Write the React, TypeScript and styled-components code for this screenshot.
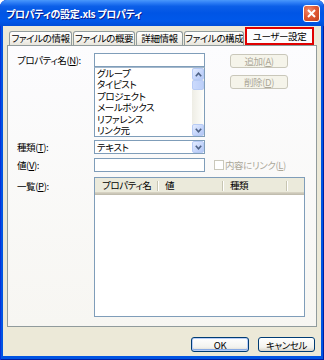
import styled, { createGlobalStyle, css } from 'styled-components';

const GlobalStyle = createGlobalStyle`
  html, body {
    margin: 0;
    padding: 0;
    background: #ffffff;
  }
  body {
    font-family: "Noto Sans CJK JP", "Noto Sans", sans-serif;
  }
`;

const uiText = css`
  font-family: "Noto Sans CJK JP", "Liberation Sans", sans-serif;
  font-size: 9.5px;
  letter-spacing: -0.4px;
  font-feature-settings: "palt";
  color: #000;
`;

const tabs = [
  { label: 'ファイルの情報', width: 63 },
  { label: 'ファイルの概要', width: 62 },
  { label: '詳細情報', width: 47 },
  { label: 'ファイルの構成', width: 60 },
  { label: 'ユーザー設定', width: 69, active: true },
];

const propNames = ['グループ', 'タイピスト', 'プロジェクト', 'メールボックス', 'リファレンス', 'リンク元'];

const columns = [
  { label: 'プロパティ名', width: 63 },
  { label: '値', width: 65 },
  { label: '種類', width: 64 },
];

const Chevron = ({ up }: { up?: boolean }) => (
  <svg width="7" height="5" viewBox="0 0 7 5">
    <polyline
      points={up ? '0.8,4.2 3.5,1.2 6.2,4.2' : '0.8,0.8 3.5,3.8 6.2,0.8'}
      fill="none"
      stroke="#4D6185"
      strokeWidth="1.6"
    />
  </svg>
);

const App = () => {
  return (
    <>
      <GlobalStyle />
      <Window>
        <TitleBar>
          <Title>プロパティの設定.xls プロパティ</Title>
          <CloseButton>
            <svg width="9" height="9" viewBox="0 0 9 9">
              <path d="M1 1 L8 8 M8 1 L1 8" stroke="#fff" strokeWidth="2" />
            </svg>
          </CloseButton>
        </TitleBar>
        <Client>
          <TabStrip>
            {tabs.map((t) => (
              <Tab key={t.label} $width={t.width} $active={!!t.active}>
                {t.label}
              </Tab>
            ))}
          </TabStrip>
          <Panel>
            <Row>
              <FieldLabel>
                プロパティ名(<u>N</u>):
              </FieldLabel>
              <Stack>
                <TextBox />
                <ListBox>
                  <Items>
                    {propNames.map((n) => (
                      <Item key={n}>{n}</Item>
                    ))}
                  </Items>
                  <VScroll>
                    <ScrollArrow>
                      <Chevron up />
                    </ScrollArrow>
                    <Thumb />
                    <Track />
                    <ScrollArrow>
                      <Chevron />
                    </ScrollArrow>
                  </VScroll>
                </ListBox>
              </Stack>
              <SideButtons>
                <PushButton $disabled>
                  追加(<u>A</u>)
                </PushButton>
                <PushButton $disabled>
                  削除(<u>D</u>)
                </PushButton>
              </SideButtons>
            </Row>
            <Row $gap={3}>
              <FieldLabel>
                種類(<u>T</u>):
              </FieldLabel>
              <Combo>
                <ComboText>テキスト</ComboText>
                <ComboDrop>
                  <Chevron />
                </ComboDrop>
              </Combo>
            </Row>
            <Row $gap={4}>
              <FieldLabel>
                値(<u>V</u>):
              </FieldLabel>
              <TextBox />
              <CheckWrap>
                <CheckBox />
                <CheckLabel>
                  内容にリンク(<u>L</u>)
                </CheckLabel>
              </CheckWrap>
            </Row>
            <Row $gap={5}>
              <FieldLabel $top={2}>
                一覧(<u>P</u>):
              </FieldLabel>
              <ListView>
                <HeaderRow>
                  {columns.map((c) => (
                    <ColHead key={c.label} $width={c.width}>
                      {c.label}
                    </ColHead>
                  ))}
                  <ColFiller />
                </HeaderRow>
              </ListView>
            </Row>
          </Panel>
          <Footer>
            <PushButton $default $wide>
              OK
            </PushButton>
            <PushButton $wide>キャンセル</PushButton>
          </Footer>
        </Client>
      </Window>
    </>
  );
};

const Window = styled.div`
  width: 324px;
  height: 360px;
  box-sizing: border-box;
  display: flex;
  flex-direction: column;
  background: #0054e3;
  border-radius: 7px 7px 0 0;
  box-shadow: inset 1px 0 0 #0831d9, inset -1px 0 0 #001ea0, inset 0 -1px 0 #001ea0;
  overflow: hidden;
`;

const TitleBar = styled.div`
  height: 26px;
  flex: none;
  display: flex;
  align-items: center;
  justify-content: space-between;
  padding: 0 4px 0 6px;
  background: linear-gradient(
    180deg,
    #4a98fb 0%,
    #2f7ff6 10%,
    #0c5fe8 24%,
    #0055e5 50%,
    #0058ea 80%,
    #004ed8 100%
  );
`;

const Title = styled.div`
  font-family: "Noto Sans CJK JP", "Liberation Sans", sans-serif;
  font-size: 10px;
  font-weight: 700;
  letter-spacing: -0.3px;
  font-feature-settings: "palt";
  color: #fff;
  text-shadow: 1px 1px 0 #0a1a8a;
`;

const CloseButton = styled.div`
  width: 17px;
  height: 17px;
  box-sizing: border-box;
  border: 1px solid #fff;
  border-radius: 3px;
  display: flex;
  align-items: center;
  justify-content: center;
  background: radial-gradient(circle at 35% 30%, #f08e70 0%, #e05a36 45%, #c3401c 100%);
`;

const Client = styled.div`
  flex: 1;
  margin: 0 3px 4px;
  background: #ece9d8;
  padding: 1px 4px 0;
  display: flex;
  flex-direction: column;
`;

const TabStrip = styled.div`
  height: 18px;
  display: flex;
  align-items: flex-end;
  gap: 1px;
  padding-left: 2px;
`;

const Tab = styled.div<{ $width: number; $active: boolean }>`
  ${uiText}
  width: ${(p) => p.$width}px;
  box-sizing: border-box;
  text-align: center;
  white-space: nowrap;
  overflow: hidden;
  ${(p) =>
    p.$active
      ? css`
          height: 18px;
          line-height: 14px;
          border: 2px solid #e00000;
          background: #fcfcfe;
        `
      : css`
          height: 14px;
          line-height: 13px;
          border: 1px solid #919b9c;
          border-bottom: none;
          border-radius: 3px 3px 0 0;
          background: linear-gradient(180deg, #ffffff 0%, #f4f3ee 60%, #e7e5dc 100%);
        `}
`;

const Panel = styled.div`
  width: 310px;
  height: 282px;
  box-sizing: border-box;
  border: 1px solid #919b9c;
  background: linear-gradient(180deg, #fcfcfe 0%, #f7f6f2 100%);
  padding: 7px 0 0 9px;
  display: flex;
  flex-direction: column;
`;

const Row = styled.div<{ $gap?: number }>`
  display: flex;
  align-items: flex-start;
  margin-top: ${(p) => p.$gap ?? 0}px;
`;

const FieldLabel = styled.div<{ $top?: number }>`
  ${uiText}
  width: 77px;
  flex: none;
  line-height: 14px;
  padding-top: ${(p) => p.$top ?? 0}px;
  white-space: nowrap;
`;

const Stack = styled.div`
  width: 111px;
  display: flex;
  flex-direction: column;
`;

const TextBox = styled.div`
  width: 111px;
  height: 14px;
  box-sizing: border-box;
  border: 1px solid #7f9db9;
  background: #fff;
  flex: none;
`;

const ListBox = styled.div`
  height: 70px;
  box-sizing: border-box;
  border: 1px solid #7f9db9;
  border-top-color: #a5b9cd;
  background: #fff;
  display: flex;
`;

const Items = styled.div`
  flex: 1;
  padding: 0 0 0 2px;
  overflow: hidden;
`;

const Item = styled.div`
  ${uiText}
  height: 11.4px;
  line-height: 11.4px;
  white-space: nowrap;
`;

const VScroll = styled.div`
  width: 12px;
  display: flex;
  flex-direction: column;
  background: #f4f3ee;
`;

const ScrollArrow = styled.div`
  height: 12px;
  box-sizing: border-box;
  border: 1px solid #b7cbf5;
  border-radius: 2px;
  background: linear-gradient(135deg, #e4ecfe 0%, #c6d6fb 55%, #b2c6f4 100%);
  display: flex;
  align-items: center;
  justify-content: center;
`;

const Thumb = styled.div`
  height: 10px;
  box-sizing: border-box;
  border: 1px solid #b7cbf5;
  border-radius: 2px;
  background: linear-gradient(90deg, #cbdafc, #bccff9);
`;

const Track = styled.div`
  flex: 1;
  background: linear-gradient(90deg, #eeede5, #fefefb);
`;

const SideButtons = styled.div`
  display: flex;
  flex-direction: column;
  gap: 7px;
  margin-left: 25px;
  padding-top: 1px;
`;

const PushButton = styled.div<{ $disabled?: boolean; $default?: boolean; $wide?: boolean }>`
  ${uiText}
  width: ${(p) => (p.$wide ? 57 : 58)}px;
  height: ${(p) => (p.$wide ? 15 : 14)}px;
  box-sizing: border-box;
  border-radius: 3px;
  display: flex;
  align-items: center;
  justify-content: center;
  white-space: nowrap;
  ${(p) =>
    p.$disabled
      ? css`
          border: 1px solid #c9c7ba;
          background: #f5f4ea;
          color: #aca899;
        `
      : css`
          border: 1px solid #003c74;
          background: linear-gradient(180deg, #ffffff 0%, #f3f3ef 70%, #d8d4ca 100%);
        `}
  ${(p) =>
    p.$default &&
    css`
      width: 58px;
      box-shadow: inset 0 0 0 1px #b8cdf8, inset 0 -1px 0 1px #89abe4;
    `}
`;

const Combo = styled.div`
  width: 111px;
  height: 14px;
  box-sizing: border-box;
  border: 1px solid #7f9db9;
  background: #fff;
  display: flex;
  align-items: stretch;
`;

const ComboText = styled.div`
  ${uiText}
  flex: 1;
  line-height: 12px;
  padding-left: 2px;
`;

const ComboDrop = styled.div`
  width: 12px;
  box-sizing: border-box;
  border: 1px solid #b7cbf5;
  border-radius: 2px;
  background: linear-gradient(135deg, #e4ecfe 0%, #c6d6fb 55%, #b2c6f4 100%);
  display: flex;
  align-items: center;
  justify-content: center;
`;

const CheckWrap = styled.div`
  display: flex;
  align-items: center;
  gap: 1px;
  margin-left: 9px;
  height: 14px;
`;

const CheckBox = styled.div`
  width: 10px;
  height: 10px;
  box-sizing: border-box;
  border: 1px solid #cac8bb;
  background: #fff;
`;

const CheckLabel = styled.div`
  ${uiText}
  color: #aca899;
  white-space: nowrap;
`;

const ListView = styled.div`
  width: 211px;
  height: 140px;
  box-sizing: border-box;
  border: 1px solid #7f9db9;
  background: #fff;
`;

const HeaderRow = styled.div`
  height: 17px;
  display: flex;
  background: #ebeadb;
  box-shadow: inset 0 -1px 0 #c1bdae, inset 0 -2px 0 #cbc7b8, inset 0 -3px 0 #d6d2c2;
`;

const ColHead = styled.div<{ $width: number }>`
  ${uiText}
  width: ${(p) => p.$width}px;
  box-sizing: border-box;
  padding-left: 7px;
  line-height: 15px;
  white-space: nowrap;
  position: relative;
  &::after {
    content: '';
    position: absolute;
    right: 0;
    top: 3px;
    bottom: 4px;
    width: 1px;
    background: #c7c5b2;
    box-shadow: 1px 0 0 #fff;
  }
`;

const ColFiller = styled.div`
  flex: 1;
`;

const Footer = styled.div`
  display: flex;
  justify-content: flex-end;
  gap: 9px;
  padding: 10px 2px 0 0;
`;

export default App;
